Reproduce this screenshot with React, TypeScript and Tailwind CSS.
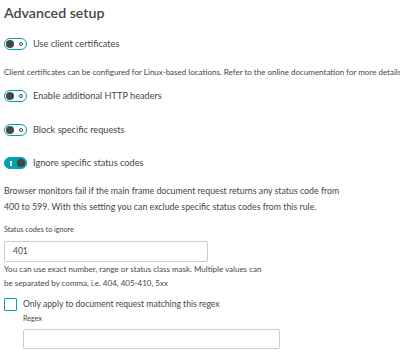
import React from 'react'

const font = { fontFamily: 'Lato, "Open Sans", sans-serif' }

function Toggle({ on }: { on?: boolean }) {
  if (on) {
    return (
      <span className="relative inline-flex h-[12px] w-[23px] shrink-0 items-center rounded-full border border-[#00a1b2] bg-[#00a1b2]">
        <span className="absolute left-[5px] top-[3px] h-[5px] w-[1.5px] bg-white" />
        <span className="absolute right-[1px] top-[1px] h-[8px] w-[8px] rounded-full bg-[#454646]" />
      </span>
    )
  }
  return (
    <span className="relative inline-flex h-[12px] w-[23px] shrink-0 items-center rounded-full border-[1.5px] border-[#00a1b2] bg-white">
      <span className="absolute left-[1px] top-[0.5px] h-[8px] w-[8px] rounded-full bg-[#454646]" />
      <span className="absolute right-[3px] top-[2.5px] h-[4px] w-[4px] rounded-full border border-[#454646]" />
    </span>
  )
}

function ToggleRow({ label, on }: { label: string; on?: boolean }) {
  return (
    <div className="flex h-[16px] items-center gap-[6px]">
      <Toggle on={on} />
      <span className="text-[9.2px] leading-[16px]">{label}</span>
    </div>
  )
}

export default function App() {
  return (
    <div className="h-[352px] w-[400px] overflow-hidden bg-white pl-[4px] pt-[3px] text-[#454646]" style={font}>
      <h1 className="text-[14.2px] font-semibold leading-[20px] text-[#454646]">Advanced setup</h1>

      <div className="mt-[13px]">
        <ToggleRow label="Use client certificates" />
      </div>
      <p className="mt-[14px] whitespace-nowrap text-[8px] leading-[12px]">
        Client certificates can be configured for Linux-based locations. Refer to the online documentation for more details
      </p>

      <div className="mt-[10px]">
        <ToggleRow label="Enable additional HTTP headers" />
      </div>
      <div className="mt-[18px]">
        <ToggleRow label="Block specific requests" />
      </div>
      <div className="mt-[17px]">
        <ToggleRow label="Ignore specific status codes" on />
      </div>

      <p className="mt-[12px] w-[345px] text-[8.8px] leading-[16px]">
        Browser monitors fail if the main frame document request returns any status code from 400 to 599. With this
        setting you can exclude specific status codes from this rule.
      </p>

      <label className="mt-[9px] block text-[7.2px] leading-[12px]">Status codes to ignore</label>
      <div className="mt-[5px] flex h-[21px] w-[204px] items-center rounded-[2px] border border-[#cccccc] px-[8px] text-[8.5px]">
        401
      </div>
      <p className="w-[264px] text-[8px] leading-[14px]">
        You can use exact number, range or status class mask. Multiple values can be separated by comma, i.e. 404,
        405-410, 5xx
      </p>

      <div className="mt-[8px] flex items-center gap-[6px]">
        <span className="h-[13px] w-[13px] shrink-0 rounded-[1px] border-[1.5px] border-[#00a1b2] bg-white" />
        <span className="text-[8.6px] leading-[13px]">Only apply to document request matching this regex</span>
      </div>
      <div className="pl-[19px]">
        <label className="mt-[2px] block text-[7.2px] leading-[12px]">Regex</label>
        <div className="mt-[4px] h-[20px] w-[257px] rounded-[2px] border border-[#cccccc]" />
      </div>
    </div>
  )
}
